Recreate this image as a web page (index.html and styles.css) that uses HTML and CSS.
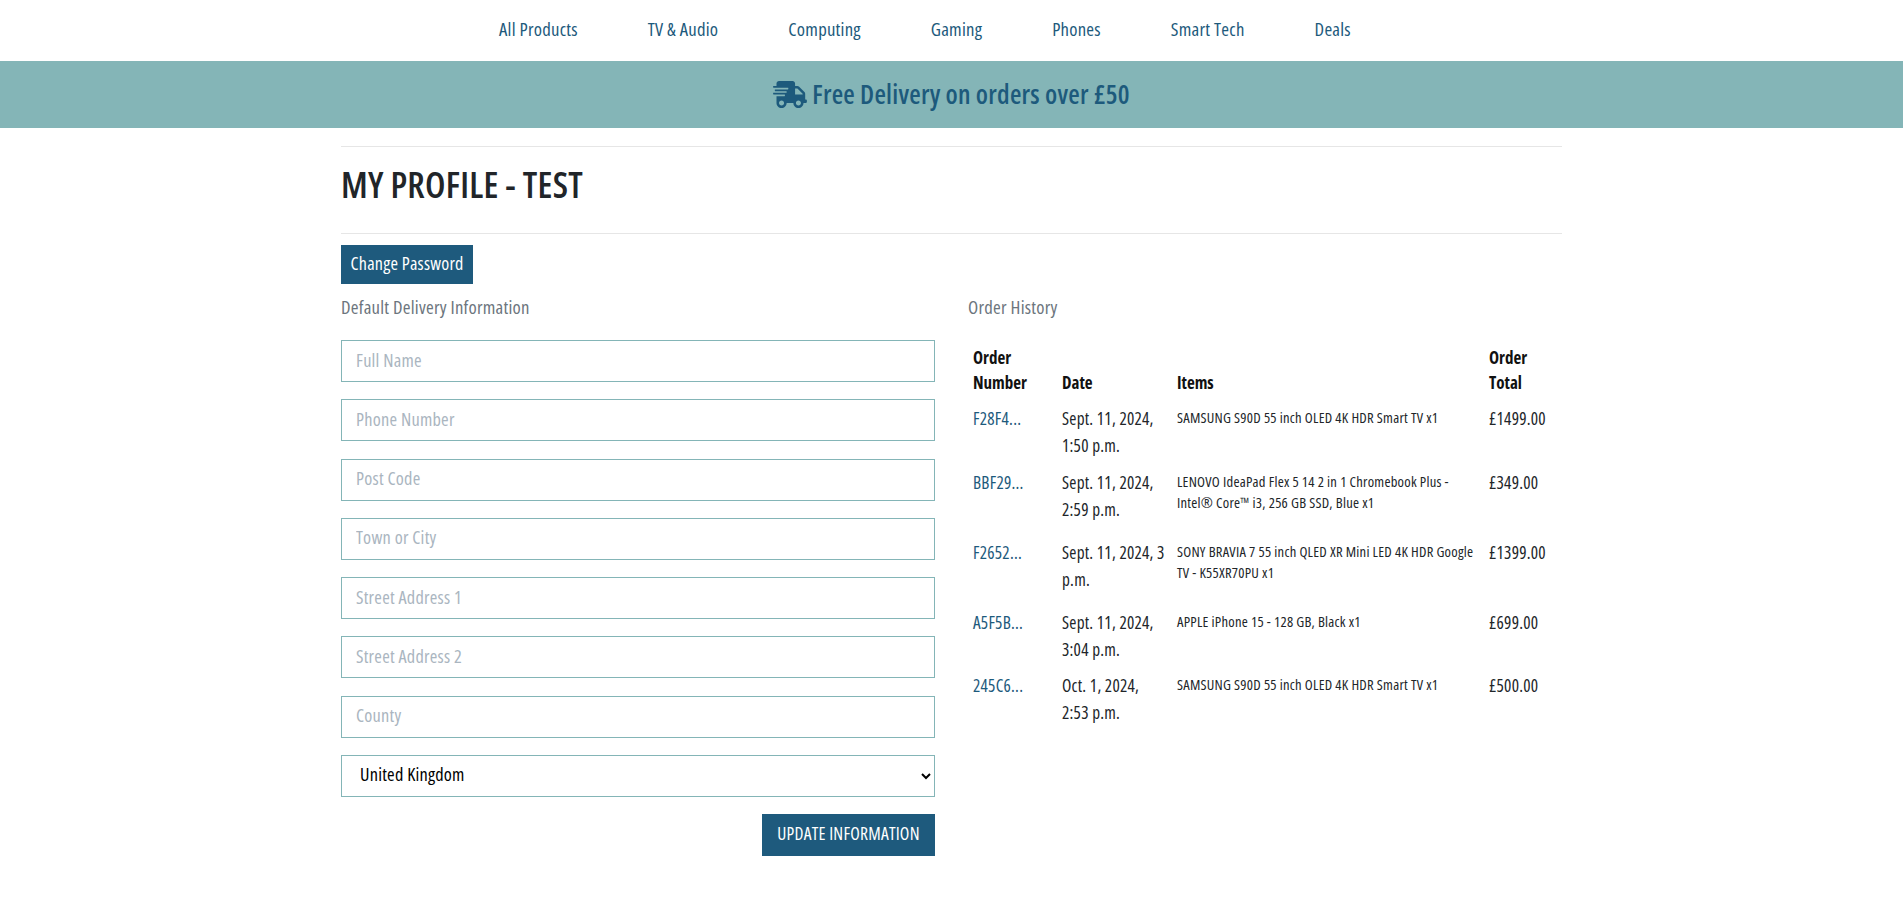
FILE: index.html
```html
<!DOCTYPE html>
<html>

<head>
  <title>My Profile</title>
  <meta name="viewport" content="width=device-width, initial-scale=1.0">
  <link rel="stylesheet" href="styles.css">
</head>

<body>
  <nav class="main-nav">
    <a href="#">All Products</a>
    <a href="#">TV &amp; Audio</a>
    <a href="#">Computing</a>
    <a href="#">Gaming</a>
    <a href="#">Phones</a>
    <a href="#">Smart Tech</a>
    <a href="#">Deals</a>
  </nav>
  <div class="banner">
    <svg class="truck" viewBox="0 0 640 512" aria-hidden="true">
      <path d="M624 352h-16V243.9c0-12.7-5.1-24.9-14.1-33.9L494 110.1c-9-9-21.2-14.1-33.9-14.1H416V48c0-26.5-21.5-48-48-48H112C85.5 0 64 21.5 64 48v48H8c-4.4 0-8 3.6-8 8v16c0 4.4 3.6 8 8 8h272c4.4 0 8 3.6 8 8v16c0 4.4-3.6 8-8 8H40c-4.4 0-8 3.6-8 8v16c0 4.4 3.6 8 8 8h208c4.4 0 8 3.6 8 8v16c0 4.4-3.6 8-8 8H8c-4.4 0-8 3.6-8 8v16c0 4.4 3.6 8 8 8h208c4.4 0 8 3.6 8 8v16c0 4.4-3.6 8-8 8H64v128c0 53 43 96 96 96s96-43 96-96h128c0 53 43 96 96 96s96-43 96-96h48c8.8 0 16-7.2 16-16v-32c0-8.8-7.2-16-16-16zM160 464c-26.5 0-48-21.5-48-48s21.5-48 48-48 48 21.5 48 48-21.5 48-48 48zm320 0c-26.5 0-48-21.5-48-48s21.5-48 48-48 48 21.5 48 48-21.5 48-48 48zm80-208H416V144h44.1l99.9 99.9V256z"/>
    </svg>
    <span>Free Delivery on orders over £50</span>
  </div>

  <main class="container">
    <hr>
    <h1 class="page-title">MY PROFILE - TEST</h1>
    <hr>
    <a class="btn btn-small" href="#">Change Password</a>

    <div class="columns">
      <section class="col-left">
        <p class="section-label">Default Delivery Information</p>
        <form class="profile-form">
          <input type="text" placeholder="Full Name">
          <input type="text" placeholder="Phone Number">
          <input type="text" placeholder="Post Code">
          <input type="text" placeholder="Town or City">
          <input type="text" placeholder="Street Address 1">
          <input type="text" placeholder="Street Address 2">
          <input type="text" placeholder="County">
          <select>
            <option>United Kingdom</option>
          </select>
          <button class="btn btn-update" type="button">UPDATE INFORMATION</button>
        </form>
      </section>

      <section class="col-right">
        <p class="section-label">Order History</p>
        <table class="orders">
          <thead>
            <tr>
              <th class="c-num">Order Number</th>
              <th class="c-date">Date</th>
              <th class="c-items">Items</th>
              <th class="c-total">Order Total</th>
            </tr>
          </thead>
          <tbody>
            <tr class="row-first">
              <td><a href="#">F28F4...</a></td>
              <td>Sept. 11, 2024, 1:50 p.m.</td>
              <td class="items">SAMSUNG S90D 55 inch OLED 4K HDR Smart TV x1</td>
              <td>£1499.00</td>
            </tr>
            <tr class="row-b">
              <td><a href="#">BBF29...</a></td>
              <td>Sept. 11, 2024, 2:59 p.m.</td>
              <td class="items">LENOVO IdeaPad Flex 5 14 2 in 1 Chromebook Plus - Intel® Core™ i3, 256 GB SSD, Blue x1</td>
              <td>£349.00</td>
            </tr>
            <tr class="row-b">
              <td><a href="#">F2652...</a></td>
              <td>Sept. 11, 2024, 3 p.m.</td>
              <td class="items">SONY BRAVIA 7 55 inch QLED XR Mini LED 4K HDR Google TV - K55XR70PU x1</td>
              <td>£1399.00</td>
            </tr>
            <tr class="row-a">
              <td><a href="#">A5F5B...</a></td>
              <td>Sept. 11, 2024, 3:04 p.m.</td>
              <td class="items">APPLE iPhone 15 - 128 GB, Black x1</td>
              <td>£699.00</td>
            </tr>
            <tr class="row-a">
              <td><a href="#">245C6...</a></td>
              <td>Oct. 1, 2024, 2:53 p.m.</td>
              <td class="items">SAMSUNG S90D 55 inch OLED 4K HDR Smart TV x1</td>
              <td>£500.00</td>
            </tr>
          </tbody>
        </table>
      </section>
    </div>
  </main>
</body>

</html>
```

FILE: styles.css
```css
body {
  font-family: "Open Sans", "Noto Sans", sans-serif;
  font-stretch: 75%;
  font-size: 17.2px;
  letter-spacing: 0.014em;
  line-height: 27px;
  color: #212529;
  margin: 0;
  padding: 0;
}

a {
  color: #1d5a7c;
  text-decoration: none;
}

.main-nav {
  height: 56px;
  padding-bottom: 5px;
  padding-right: 53px;
  display: flex;
  justify-content: center;
  align-items: center;
  gap: 70px;
  font-size: 18.7px;
}

.banner {
  height: 66px;
  padding-bottom: 1px;
  background-color: #84b5b7;
  color: #1d5a7c;
  font-size: 26.3px;
  font-weight: 600;
  display: flex;
  justify-content: center;
  align-items: center;
  gap: 5px;
}

.truck {
  width: 34px;
  height: 27px;
  fill: #1d5a7c;
}

.container {
  width: 1221px;
  margin-left: 341px;
}

hr {
  border: 0;
  border-top: 1px solid #e6e6e6;
  margin: 0;
}

.container > hr:first-child {
  margin-top: 18px;
}

.page-title {
  font-size: 36px;
  font-weight: 600;
  line-height: 38px;
  margin: 0;
  padding: 19px 0 29px;
}

.btn {
  display: inline-block;
  background-color: #1e5a7d;
  color: #fff;
  font-weight: 500;
  border: 0;
  font-family: inherit;
  font-stretch: inherit;
  letter-spacing: inherit;
}

.btn-small {
  margin-top: 11px;
  padding: 5px 9.5px 7px;
  font-size: 18.1px;
  line-height: 27px;
}

.columns {
  display: flex;
}

.col-left {
  width: 594px;
  margin-top: 9px;
}

.col-right {
  flex: 1;
  margin-top: 9px;
  padding-left: 33px;
}

.section-label {
  margin: 0 0 20px;
  color: #6c757d;
  font-size: 18.7px;
  line-height: 27px;
}

.col-right .section-label {
  margin-bottom: 25px;
}

.profile-form {
  display: flex;
  flex-direction: column;
  align-items: flex-end;
  width: 594px;
  gap: 17.25px;
}

.profile-form input,
.profile-form select {
  width: 100%;
  height: 42px;
  box-sizing: border-box;
  border: 1px solid #84b5b7;
  border-radius: 0;
  background: #fff;
  font-family: inherit;
  font-stretch: inherit;
  letter-spacing: inherit;
  font-size: 18.3px;
  padding: 0 14px 4px;
  outline: none;
}

.profile-form input::placeholder {
  color: #aab5c0;
}

.btn-update {
  height: 42px;
  width: 173px;
  font-size: 17.5px;
  padding: 0 0 4px;
}

.orders {
  border-collapse: collapse;
  table-layout: fixed;
  width: 594px;
}

.orders th,
.orders td {
  padding: 0 5px;
  vertical-align: top;
  text-align: left;
}

.orders th {
  vertical-align: bottom;
  font-size: 17px;
  font-weight: 700;
  letter-spacing: 0;
  line-height: 25px;
  padding-bottom: 6px;
  color: #111;
}

.c-num { width: 79px; }
.c-date { width: 105px; }
.c-items { width: 302px; }
.c-total { width: 68px; }

.orders td {
  padding-top: 4px;
}

.orders td.items {
  font-size: 14.6px;
  line-height: 21px;
  padding-top: 6px;
}

.row-first { height: 64px; }
.row-a { height: 63px; }
.row-b { height: 70px; }
```
